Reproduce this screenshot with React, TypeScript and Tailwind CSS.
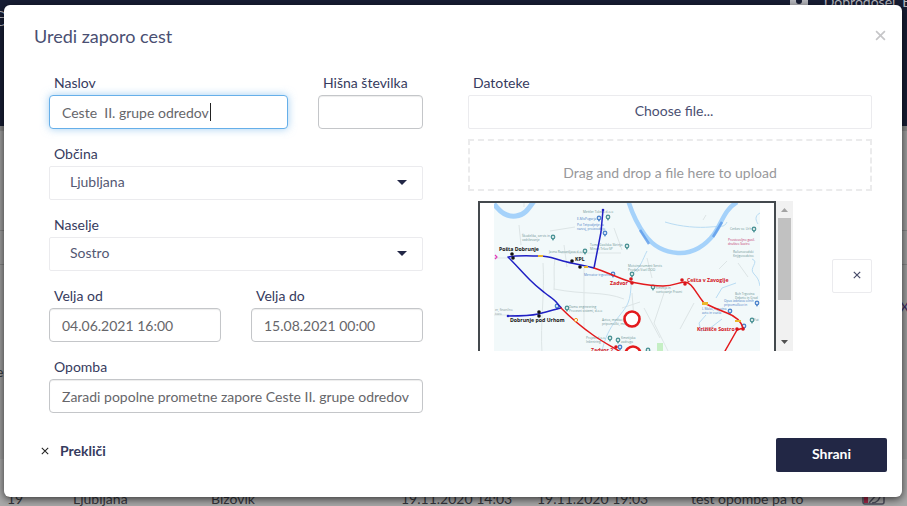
import type { ReactNode } from "react";

const textBox =
  "block h-[34px] w-full rounded border border-[#c4c6c9] bg-white px-3 text-sm text-[#66666a] shadow-[inset_0_1px_1px_rgba(0,0,0,0.075)] outline-none";

function Field({ id, label, className = "", children }: { id: string; label: string; className?: string; children: ReactNode }) {
  return (
    <div className={"min-w-0 " + className}>
      <label htmlFor={id} className="mb-0.5 block pl-[5px] text-sm leading-5 text-[#363b5e]">
        {label}
      </label>
      {children}
    </div>
  );
}

function Dropdown({ id, value }: { id: string; value: string }) {
  return (
    <div className="relative">
      <select
        id={id}
        defaultValue={value}
        className="block h-[34px] w-full appearance-none rounded-xs border border-[#ebebee] bg-white px-5 pb-0.5 text-sm text-[#545873] outline-none"
      >
        <option>{value}</option>
      </select>
      <svg className="pointer-events-none absolute top-[14px] right-4" width="10" height="5" viewBox="0 0 10 5">
        <path d="M0 0h10L5 5z" fill="#222746" />
      </svg>
    </div>
  );
}

function Cross({ size, color, weight }: { size: number; color: string; weight: number }) {
  return (
    <svg width={size} height={size} viewBox="0 0 10 10" fill="none" stroke={color} strokeWidth={weight}>
      <path d="M1 1l8 8M9 1l-8 8" />
    </svg>
  );
}

const stops: { x: number; y: number; name: string; color: string }[] = [
  { x: 5, y: 48, name: "Pošta Dobrunje", color: "#111" },
  { x: 81, y: 58, name: "KPL", color: "#111" },
  { x: 16, y: 119, name: "Dobrunje pod Urhom", color: "#111" },
  { x: 116, y: 82, name: "Zadvor", color: "#d2141c" },
  { x: 193, y: 79, name: "Cešta v Zavoglje", color: "#d2141c" },
  { x: 203, y: 128, name: "Križišče Sostro", color: "#d2141c" },
  { x: 97, y: 149, name: "Zadvor 2", color: "#d2141c" },
];

const places: { x: number; y: number; lines: string[]; color: string }[] = [
  { x: 89, y: 10, lines: ["Mettler Toledo d.o.o"], color: "#6f9696" },
  { x: 83, y: 17, lines: ["E-MisPogarja"], color: "#4a80c6" },
  { x: 83, y: 23, lines: ["Pot Tetpodjetje za", "razvoj, proizvodnjo"], color: "#4a80c6" },
  { x: 28, y: 34, lines: ["Škodelika, servis in", "vzdrževanje"], color: "#6f9696" },
  { x: 96, y: 43, lines: ["Tomo Gasilska Skrinja", "Minan Tršov SP"], color: "#6f9696" },
  { x: 55, y: 50, lines: ["Javna Razsvetljava d.o.o"], color: "#6f9696" },
  { x: 90, y: 73, lines: ["Mercator trgovina"], color: "#4a80c6" },
  { x: 134, y: 64, lines: ["Motoinstrument Servis", "Prodaja Vozil DOO"], color: "#6f9696" },
  { x: 162, y: 86, lines: ["Kmetija in", "svetovanje Pravni"], color: "#6f9696" },
  { x: 75, y: 105, lines: ["Dama engineering", "Procesni sistemi, d.o.o"], color: "#6f9696" },
  { x: 108, y: 118, lines: ["Avtos, mediacija", "pripomočki, meritve"], color: "#6f9696" },
  { x: 92, y: 136, lines: ["Projekt d.o.o.", "Inženiring"], color: "#6f9696" },
  { x: 127, y: 136, lines: ["Kmetijska", "zadruga"], color: "#6f9696" },
  { x: 1, y: 108, lines: ["er, finančno", "tovo"], color: "#8a9b9d" },
  { x: 236, y: 27, lines: ["Cerkev sv. Urh"], color: "#6f9696" },
  { x: 234, y: 38, lines: ["Prostovoljno gasil.", "društvo Sostro"], color: "#c2366e" },
  { x: 239, y: 50, lines: ["Računovodski", "Knjigovodstvo"], color: "#6f9696" },
  { x: 241, y: 92, lines: ["Boh Trgovina", "Debeto in Grad"], color: "#6f9696" },
  { x: 230, y: 99, lines: ["Opus izdelava očnih", "pripomočkov in"], color: "#4a80c6" },
  { x: 208, y: 107, lines: ["L Mako, trgovina", "avto in vozila"], color: "#4a80c6" },
  { x: 260, y: 118, lines: ["Fut"], color: "#6f9696" },
];

const pins: [number, number, string][] = [
  [114, 14, "#4f9597"], [105, 15, "#4f86cc"], [111, 30, "#4f86cc"], [59, 34, "#4f9597"], [133, 43, "#4f9597"],
  [91, 48, "#4f9597"], [119, 71, "#4f86cc"], [138, 71, "#4f9597"], [159, 84, "#4f9597"], [73, 105, "#4f9597"],
  [63, 103, "#4f86cc"], [116, 135, "#4f9597"], [124, 137, "#4f9597"], [126, 144, "#4f86cc"], [154, 147, "#4f9597"],
  [260, 26, "#4f9597"], [263, 100, "#4f86cc"], [236, 108, "#4f86cc"], [258, 117, "#4f9597"], [250, 123, "#4f86cc"],
];

function RouteMap() {
  return (
    <svg viewBox="0 0 266 200" className="block w-full" fontFamily="Open Sans, sans-serif" role="img" aria-label="Obvoz">
      <rect width="266" height="200" fill="#f2f9fa" />
      <g fill="none" stroke="#dde5e6" strokeWidth="1">
        <path d="M25 22l2 20M49 60c2 30-3 60-1 90M61 55c-2 12 0 20-1 32M67 50h60M70 42l3 22M0 112h20M120 25l8 22M153 55l5 20M138 90l2 26M212 12l-3 5M225 66l8-8M150 105l16 30M90 65v60M30 0v4M56 28l25-4" />
        <path d="M0 55h14M128 105l18-6M60 86c30 6 50 2 70 10M170 90l-10 30 14 28M200 100l-14 26M244 60l10 14" />
      </g>
      <g fill="none" stroke="#b9dcf3" strokeWidth="1">
        <path d="M171 19c16 5 34 6 45 5s14 1 17-5" />
        <path d="M153 48c-5 10-6 15-12 20s-2 20-7 32-20 20-26 48" />
        <path d="M266 10c-6 3-4 8-2 11M258 56c8 3-4 9 2 15s5 10 6 12M222 95l6-10 14-5M212 112l-7 8 2 8 8-2 13-10" />
      </g>
      <g fill="none" stroke="#a5d2fa">
        <path d="M0 1c7 9 13 13 22 12s13-8 18-15" strokeWidth="5" />
        <path d="M134-3c3 10 9 24 17 35s18 17 33 18 28-8 36-19 10-24 23-32" strokeWidth="4.5" />
      </g>
      <path d="M146 27l9 14M219 34l9-15" stroke="#5d9bea" strokeWidth="2.5" opacity=".8" />
      <rect x="163" y="140" width="6" height="8" fill="#c5efc4" />

      {places.map((p) => (
        <g key={p.lines[0]} fontSize="3.200" fill={p.color}>
          {p.lines.map((line, i) => (
            <text key={line} x={p.x} y={p.y + i * 4}>{line}</text>
          ))}
        </g>
      ))}
      {pins.map(([x, y, color]) => (
        <g key={x + "-" + y}>
          <path d={`M${x} ${y + 4}l-1.6-3h3.2z`} fill={color} />
          <circle cx={x} cy={y} r="1.7" fill="#fff" stroke={color} strokeWidth="1.4" />
        </g>
      ))}

      <g fill="none" strokeLinejoin="round" strokeLinecap="round" strokeWidth="1.5">
        <path d="M109 7l-2 22-7 36C89 62 80 61 69 58S55 53 46 53s-22-1-32 1c8 8 15 16 22 23s10 9 15 13 9 6 12 10 5 5 4 5c-8 2-15 4-23 6s-20 2-30 2" stroke="#2020c4" />
        <path d="M100 65c13 4 24 10 37 14 11 2 20 4 32 4s15-4 22-4c7 1 9 8 19 21 8 4 15 7 23 10s14 8 16 15l-6 2-12 21M67 105c12 12 22 20 32 27s16 10 26 16" stroke="#e3191c" />
      </g>
      <g fill="#ecb62e">
        <rect x="44" y="52" width="5" height="2" />
        <rect x="90" y="63" width="4" height="2" />
        <rect x="208" y="99" width="6" height="3" />
        <rect x="241" y="117" width="6" height="2" />
      </g>
      <circle cx="82" cy="117" r="1.6" fill="#fff" stroke="#f2941d" />
      <g fill="#111">
        <circle cx="18" cy="51" r="1.8" />
        <circle cx="19" cy="55" r="1.8" />
        <circle cx="78" cy="58" r="1.8" />
        <circle cx="86" cy="64" r="1.8" />
        <circle cx="45" cy="109" r="1.8" />
        <circle cx="45" cy="113" r="1.8" />
      </g>
      <path d="M1 52l2 2-2 2" fill="none" stroke="#e43bb8" strokeWidth="1.2" />
      <circle cx="109" cy="7" r="1.3" fill="#2020c4" />
      <circle cx="14" cy="113" r="1.3" fill="#2020c4" />
      <g fill="#d8151b">
        <circle cx="137" cy="76" r="1.8" />
        <circle cx="138" cy="80" r="1.8" />
        <circle cx="188" cy="77" r="1.8" />
        <circle cx="191" cy="81" r="1.8" />
        <circle cx="243" cy="126" r="1.8" />
        <circle cx="249" cy="126" r="1.8" />
        <circle cx="122" cy="144" r="1.8" />
      </g>
      <g fill="#fff" stroke="#e3191c" strokeWidth="2.6">
        <circle cx="138" cy="116" r="7.5" />
        <circle cx="139" cy="151" r="7.5" />
      </g>
      {stops.map((s) => (
        <text key={s.name} x={s.x} y={s.y} fontSize="5.200" fontWeight="700" fill={s.color}>{s.name}</text>
      ))}
    </svg>
  );
}

function Backdrop() {
  return (
    <div aria-hidden="true" className="h-screen overflow-hidden bg-[#a0a0a0] text-sm text-[#34363c]">
      <header className="flex h-[126px] items-start justify-between bg-[#181e35] text-[#b9bac0]">
        <span className="-ml-2 text-3xl leading-7 font-light">e</span>
        <div className="-mr-[26px] flex h-5 -translate-y-2 items-center gap-4">
          <svg width="18" height="20" viewBox="0 0 18 20">
            <rect width="18" height="20" fill="#b9bac0" />
            <circle cx="9" cy="9" r="3" fill="#181e35" />
          </svg>
          <span className="leading-5">Dobrodošel, Elekt</span>
        </div>
      </header>
      <div className="h-[5px] bg-[#8c8c8c]" />
      <div className="h-[99px]" />
      <div className="h-[34px] border-t border-[#878787]" />
      <div className="h-[195px] border-t border-[#878787]">
        <div className="flex h-[84px] items-center justify-end text-[#3e2a63]">
          <span className="w-[7px]">X</span>
        </div>
        <span className="-ml-1 block leading-[46px]">e</span>
      </div>
      <div className="flex h-20 bg-[#a9a9a9] pt-[30px] leading-5">
        <span className="w-[73px] pl-[7px]">19</span>
        <span className="w-[138px]">Ljubljana</span>
        <span className="w-[190px]">Bizovik</span>
        <span className="w-[136px]">19.11.2020 14:03</span>
        <span className="w-[154px]">19.11.2020 19:03</span>
        <span className="w-[171px]">test opombe pa to</span>
        <svg width="24" height="20" viewBox="0 0 24 20" fill="none" stroke="#4c4d5c" strokeWidth="1.5">
          <rect x="1" y="2" width="21" height="13" rx="2" />
          <path d="M2 3h4v11H2z" fill="#a32646" stroke="none" />
          <path d="M7 14L17 3M10 14c5 0 8-4 9-10" />
        </svg>
      </div>
    </div>
  );
}

export default function App() {
  return (
    <div className="relative font-[Lato,sans-serif]">
      <Backdrop />
      <div className="absolute inset-0 pt-[5px] pr-[5px] pl-1">
        <div role="dialog" aria-labelledby="dialog-title" className="rounded-md bg-white shadow-[0_2px_9px_rgba(0,0,0,0.7)]">
          <div className="flex items-start justify-between px-4 pt-[18px] pl-[30px]">
            <h1 id="dialog-title" className="text-lg leading-[26px] text-[#4a4f72]">Uredi zaporo cest</h1>
            <button type="button" aria-label="Zapri" className="pt-[7px]">
              <Cross size={11} color="#c6c6c8" weight={1.5} />
            </button>
          </div>

          <form>
            <div className="flex gap-[45px] pt-6 pr-[30px] pl-[45px]">
              <div className="flex min-w-0 flex-[374] flex-col gap-[15px]">
                <div className="flex gap-[30px]">
                  <Field id="naslov" label="Naslov" className="flex-[239]">
                    <div className="relative">
                      <input
                        id="naslov"
                        defaultValue="Ceste  II. grupe odredov"
                        className="block h-[34px] w-full rounded border border-[#66afe9] bg-white px-3 text-sm text-[#66666a] shadow-[0_0_8px_rgba(102,175,233,0.6)] outline-none"
                      />
                      <span className="absolute top-2 left-[161px] h-[18px] w-px bg-[#222]" />
                    </div>
                  </Field>
                  <Field id="hisna" label="Hišna številka" className="flex-[105]">
                    <input id="hisna" className={textBox} />
                  </Field>
                </div>
                <Field id="obcina" label="Občina">
                  <Dropdown id="obcina" value="Ljubljana" />
                </Field>
                <Field id="naselje" label="Naselje">
                  <Dropdown id="naselje" value="Sostro" />
                </Field>
                <div className="flex gap-[30px]">
                  <Field id="od" label="Velja od" className="flex-1">
                    <input id="od" defaultValue="04.06.2021 16:00" className={textBox} />
                  </Field>
                  <Field id="do" label="Velja do" className="flex-1">
                    <input id="do" defaultValue="15.08.2021 00:00" className={textBox} />
                  </Field>
                </div>
                <Field id="opomba" label="Opomba">
                  <input
                    id="opomba"
                    defaultValue="Zaradi popolne prometne zapore Ceste II. grupe odredov"
                    className={textBox}
                  />
                </Field>
              </div>

              <div className="min-w-0 flex-[404]">
                <Field id="datoteke" label="Datoteke">
                  <button
                    id="datoteke"
                    type="button"
                    className="block h-[34px] w-full rounded-xs border border-[#ebebee] pb-0.5 pl-2 text-center text-sm text-[#4a4f72]"
                  >
                    Choose file...
                  </button>
                </Field>
                <div className="mt-[10px] h-[52px] border-2 border-dashed border-[#ebebec] pt-[22px] text-center text-sm leading-5 text-[#98989b]">
                  Drag and drop a file here to upload
                </div>
                <div className="mt-[10px] flex items-center justify-between pl-[10px]">
                  <div className="flex h-[150px] w-[315px] overflow-hidden">
                    <div className="h-[220px] flex-1 border-2 border-[#44494d] px-[14px]">
                      <RouteMap />
                    </div>
                    <div className="flex w-[17px] flex-col items-center justify-between bg-[#f1f1f1] py-[7px]">
                      <svg width="7" height="4" viewBox="0 0 7 4"><path d="M0 4h7L3.500 0z" fill="#a3a3a3" /></svg>
                      <div className="mt-[6px] mb-auto h-[82px] w-[13px] bg-[#c1c1c1]" />
                      <svg width="7" height="4" viewBox="0 0 7 4"><path d="M0 0h7L3.500 4z" fill="#505050" /></svg>
                    </div>
                  </div>
                  <button
                    type="button"
                    aria-label="Odstrani datoteko"
                    className="flex h-[34px] w-10 items-center justify-center rounded-xs border border-[#ebebee] pb-0.5 pl-[10px]"
                  >
                    <Cross size={8} color="#484c69" weight={1.5} />
                  </button>
                </div>
              </div>
            </div>

            <div className="flex items-center justify-between pt-[25px] pr-[15px] pb-[25px] pl-[37px]">
              <button type="button" className="flex h-[34px] items-center gap-[11px] pb-2 text-sm font-bold text-[#363b5e]">
                <Cross size={8} color="#222" weight={1.3} />
                Prekliči
              </button>
              <button type="submit" className="h-[34px] w-[111px] rounded-xs bg-[#222745] pb-0.5 text-sm font-bold text-white">
                Shrani
              </button>
            </div>
          </form>
        </div>
      </div>
    </div>
  );
}
